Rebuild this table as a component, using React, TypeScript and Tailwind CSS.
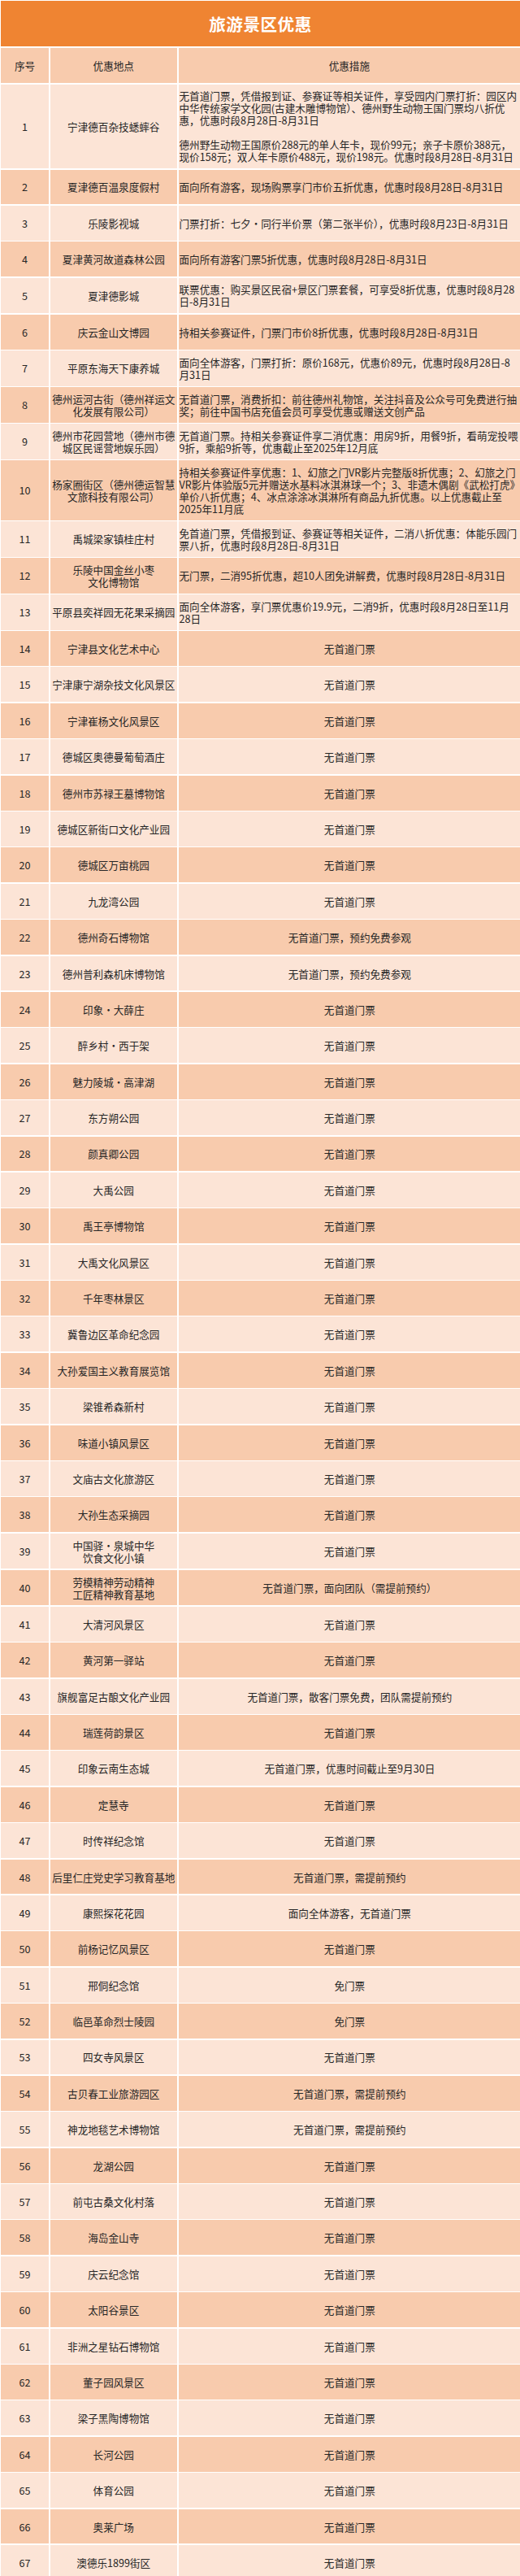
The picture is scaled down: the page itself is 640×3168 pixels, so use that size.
import { Fragment } from "react";

type Row = { place: string[]; info: string[]; left?: boolean };

const rows: Row[] = [
  {
    place: ["宁津德百杂技蟋蟀谷"],
    info: [
      "无首道门票，凭借报到证、参赛证等相关证件，享受园内门票打折：园区内",
      "中华传统家学文化园(古建木雕博物馆）、德州野生动物王国门票均八折优",
      "惠，优惠时段8月28日-8月31日",
      "",
      "德州野生动物王国原价288元的单人年卡，现价99元；亲子卡原价388元，",
      "现价158元；双人年卡原价488元，现价198元。优惠时段8月28日-8月31日",
    ],
    left: true,
  },
  { place: ["夏津德百温泉度假村"], info: ["面向所有游客，现场购票享门市价五折优惠，优惠时段8月28日-8月31日"], left: true },
  { place: ["乐陵影视城"], info: ["门票打折：七夕·同行半价票（第二张半价），优惠时段8月23日-8月31日"], left: true },
  { place: ["夏津黄河故道森林公园"], info: ["面向所有游客门票5折优惠，优惠时段8月28日-8月31日"], left: true },
  {
    place: ["夏津德影城"],
    info: ["联票优惠：购买景区民宿+景区门票套餐，可享受8折优惠，优惠时段8月28", "日-8月31日"],
    left: true,
  },
  { place: ["庆云金山文博园"], info: ["持相关参赛证件，门票门市价8折优惠，优惠时段8月28日-8月31日"], left: true },
  {
    place: ["平原东海天下康养城"],
    info: ["面向全体游客，门票打折：原价168元，优惠价89元，优惠时段8月28日-8", "月31日"],
    left: true,
  },
  {
    place: ["德州运河古街（德州祥运文", "化发展有限公司）"],
    info: ["无首道门票，消费折扣：前往德州礼物馆，关注抖音及公众号可免费进行抽", "奖；前往中国书店充值会员可享受优惠或赠送文创产品"],
    left: true,
  },
  {
    place: ["德州市花园营地（德州市德", "城区民谣营地娱乐园）"],
    info: ["无首道门票。持相关参赛证件享二消优惠：用房9折，用餐9折，看萌宠投喂", "9折，乘船9折等，优惠截止至2025年12月底"],
    left: true,
  },
  {
    place: ["杨家圈街区（德州德运智慧", "文旅科技有限公司）"],
    info: [
      "持相关参赛证件享优惠：1、幻旅之门VR影片完整版8折优惠；2、幻旅之门",
      "VR影片体验版5元并赠送水基料冰淇淋球一个；3、非遗木偶剧《武松打虎》",
      "单价八折优惠；4、冰点涂涂冰淇淋所有商品九折优惠。以上优惠截止至",
      "2025年11月底",
    ],
    left: true,
  },
  {
    place: ["禹城梁家镇桂庄村"],
    info: ["免首道门票，凭借报到证、参赛证等相关证件，二消八折优惠：体能乐园门", "票八折，优惠时段8月28日-8月31日"],
    left: true,
  },
  {
    place: ["乐陵中国金丝小枣", "文化博物馆"],
    info: ["无门票，二消95折优惠，超10人团免讲解费，优惠时段8月28日-8月31日"],
    left: true,
  },
  {
    place: ["平原县奕祥园无花果采摘园"],
    info: ["面向全体游客，享门票优惠价19.9元，二消9折，优惠时段8月28日至11月", "28日"],
    left: true,
  },
];

const simple: [string | string[], string?][] = [
  ["宁津县文化艺术中心"],
  ["宁津康宁湖杂技文化风景区"],
  ["宁津崔杨文化风景区"],
  ["德城区奥德曼葡萄酒庄"],
  ["德州市苏禄王墓博物馆"],
  ["德城区新街口文化产业园"],
  ["德城区万亩桃园"],
  ["九龙湾公园"],
  ["德州奇石博物馆", "无首道门票，预约免费参观"],
  ["德州普利森机床博物馆", "无首道门票，预约免费参观"],
  ["印象·大薛庄"],
  ["醉乡村·西于架"],
  ["魅力陵城·高津湖"],
  ["东方朔公园"],
  ["颜真卿公园"],
  ["大禹公园"],
  ["禹王亭博物馆"],
  ["大禹文化风景区"],
  ["千年枣林景区"],
  ["冀鲁边区革命纪念园"],
  ["大孙爱国主义教育展览馆"],
  ["梁锥希森新村"],
  ["味道小镇风景区"],
  ["文庙古文化旅游区"],
  ["大孙生态采摘园"],
  [["中国驿·泉城中华", "饮食文化小镇"]],
  [["劳模精神劳动精神", "工匠精神教育基地"], "无首道门票，面向团队（需提前预约）"],
  ["大清河风景区"],
  ["黄河第一驿站"],
  ["旗舰富足古酿文化产业园", "无首道门票，散客门票免费，团队需提前预约"],
  ["瑞莲荷韵景区"],
  ["印象云南生态城", "无首道门票，优惠时间截止至9月30日"],
  ["定慧寺"],
  ["时传祥纪念馆"],
  ["后里仁庄党史学习教育基地", "无首道门票，需提前预约"],
  ["康熙探花花园", "面向全体游客，无首道门票"],
  ["前杨记忆风景区"],
  ["邢侗纪念馆", "免门票"],
  ["临邑革命烈士陵园", "免门票"],
  ["四女寺风景区"],
  ["古贝春工业旅游园区", "无首道门票，需提前预约"],
  ["神龙地毯艺术博物馆", "无首道门票，需提前预约"],
  ["龙湖公园"],
  ["前屯古桑文化村落"],
  ["海岛金山寺"],
  ["庆云纪念馆"],
  ["太阳谷景区"],
  ["非洲之星钻石博物馆"],
  ["董子园风景区"],
  ["梁子黑陶博物馆"],
  ["长河公园"],
  ["体育公园"],
  ["奥莱广场"],
  ["澳德乐1899街区"],
];

const allRows: Row[] = [
  ...rows,
  ...simple.map(([p, i]) => ({
    place: Array.isArray(p) ? p : [p],
    info: [i ?? "无首道门票"],
  })),
];

function Lines({ lines }: { lines: string[] }) {
  return (
    <div>
      {lines.map((l, i) => (
        <div key={i} className="whitespace-nowrap h-[15px]">
          {l}
        </div>
      ))}
    </div>
  );
}

export default function App() {
  return (
    <div className="w-[640px] bg-white pt-[1px] pl-[1px] font-['Noto_Sans_CJK_SC',sans-serif] text-[12.6px] leading-[15px] text-[#262626]">
      <div className="h-[56px] bg-[#EF8432] flex items-center justify-center text-white text-[20.6px] font-bold tracking-[0.5px]">
        旅游景区优惠
      </div>
      <div className="mt-[2px] grid grid-cols-[59px_156.5px_1fr] gap-[1.5px]">
        <div className="bg-[#F8CBAD] min-h-[43px] flex items-center justify-center">序号</div>
        <div className="bg-[#F8CBAD] min-h-[43px] flex items-center justify-center">优惠地点</div>
        <div className="bg-[#F8CBAD] min-h-[43px] flex items-center justify-center">优惠措施</div>
        {allRows.map((r, idx) => {
          const bg = idx % 2 === 0 ? "bg-[#FCE4D6]" : "bg-[#F8CBAD]";
          return (
            <Fragment key={idx}>
              <div className={`${bg} min-h-[42.9px] py-[6.75px] flex items-center justify-center`}>{idx + 1}</div>
              <div className={`${bg} min-h-[42.9px] py-[6.75px] flex items-center justify-center text-center`}>
                <Lines lines={r.place} />
              </div>
              <div
                className={`${bg} min-h-[42.9px] py-[6.75px] pl-[1px] flex items-center ${
                  r.left ? "justify-start" : "justify-center text-center"
                }`}
              >
                <Lines lines={r.info} />
              </div>
            </Fragment>
          );
        })}
      </div>
    </div>
  );
}
